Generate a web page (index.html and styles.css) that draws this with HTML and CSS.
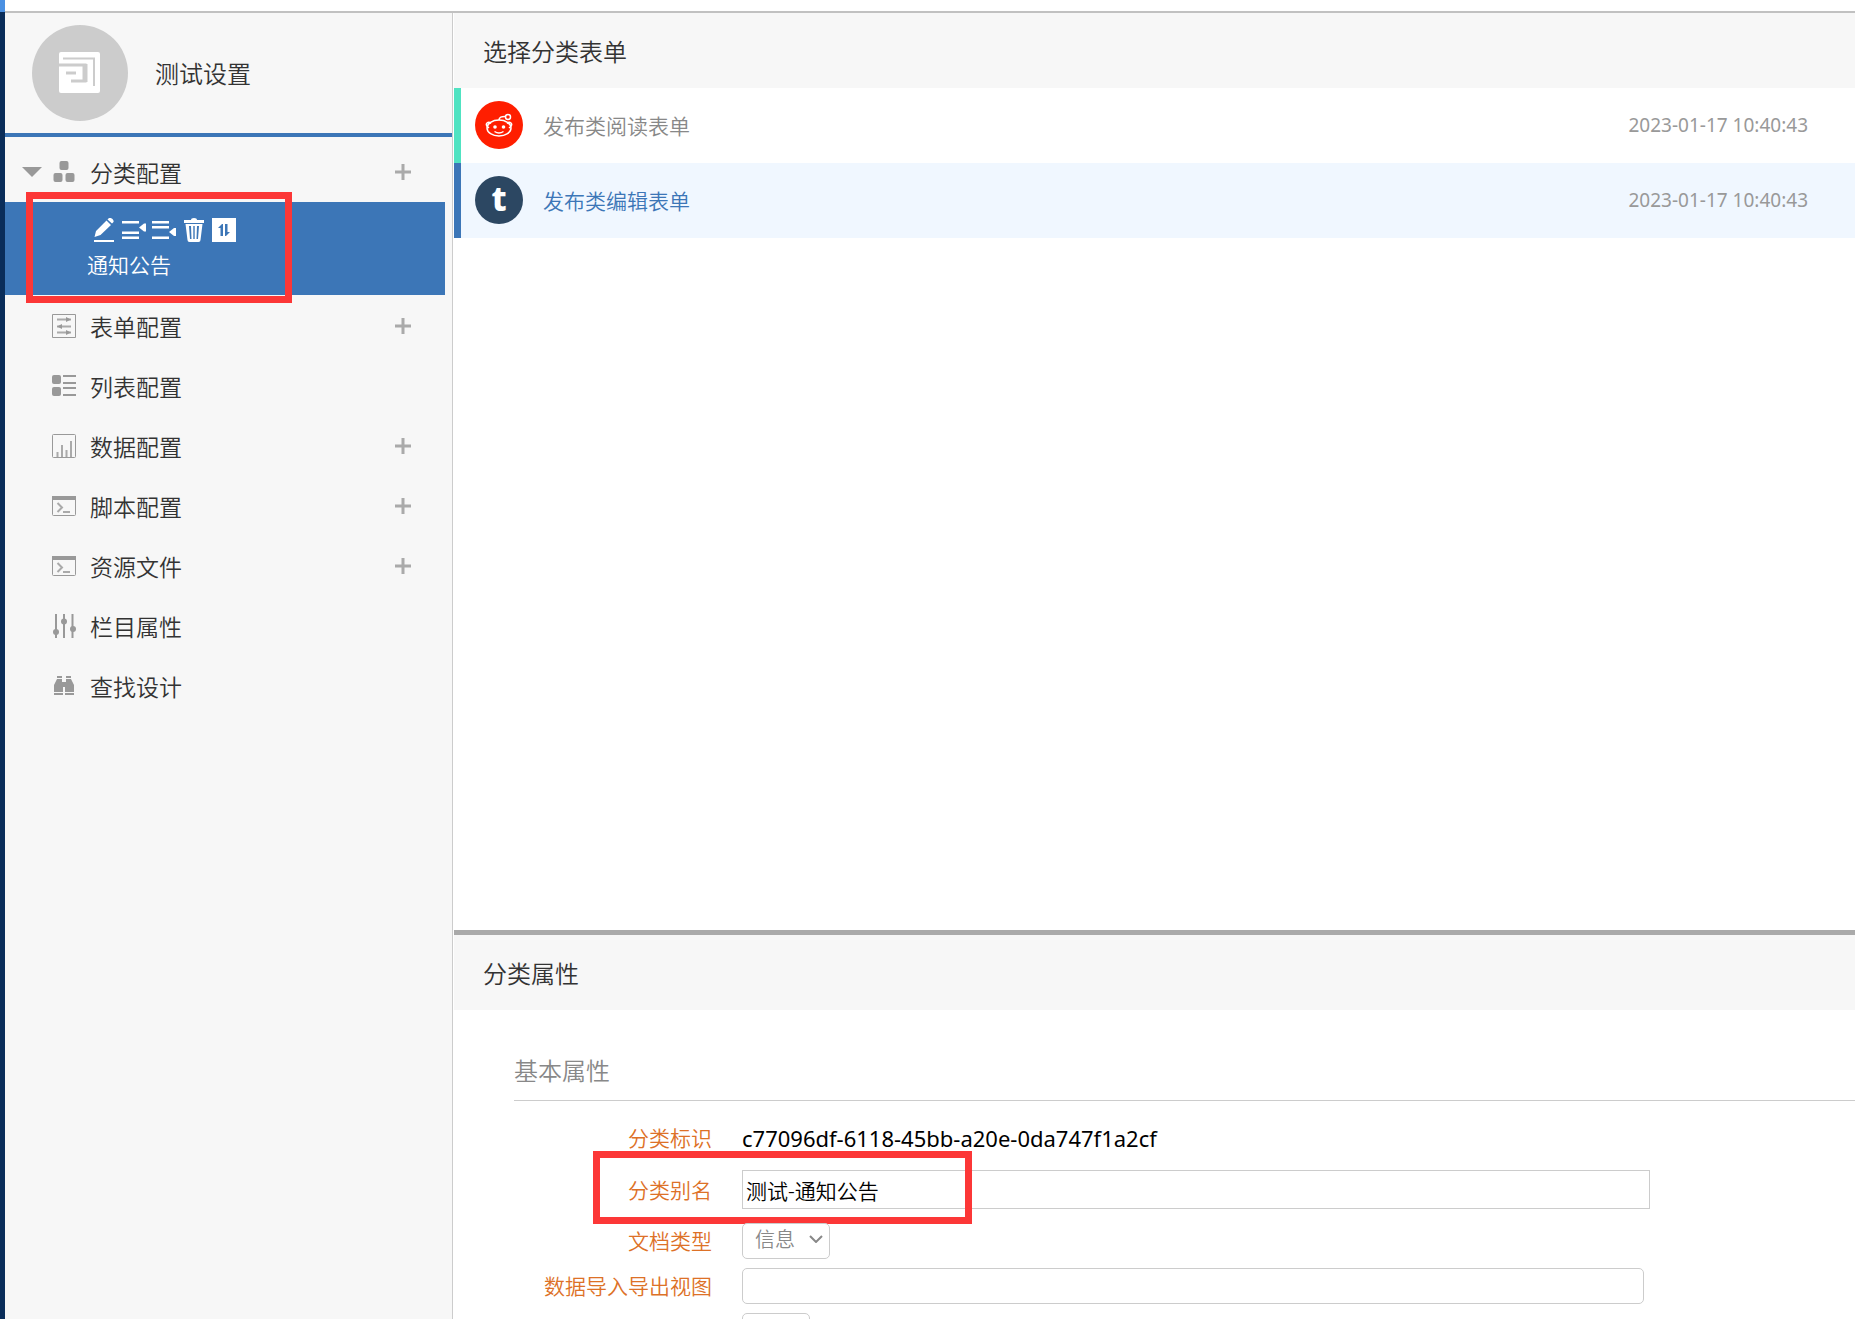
FILE: index.html
```html
<!DOCTYPE html>
<html lang="zh-CN">
<head>
  <meta charset="utf-8">
  <title>测试设置</title>
  <link rel="stylesheet" href="styles.css">
</head>
<body>
  <div class="rail"><div class="rail-active"></div></div>

  <div class="page">
    <header class="topbar"></header>
    <div class="content">

      <aside class="sidebar">
        <div class="profile">
          <svg class="avatar" viewBox="0 0 96 96">
            <circle cx="48" cy="48" r="48" fill="#cccccc"/>
            <rect x="27" y="27" width="41" height="41" rx="2" fill="#ffffff"/>
            <path d="M31 33.500H62V61" fill="none" stroke="#cccccc" stroke-width="2"/>
            <path d="M27 40H53V56H39" fill="none" stroke="#cccccc" stroke-width="3"/>
            <path d="M53 39V57" fill="none" stroke="#cccccc" stroke-width="5"/>
            <path d="M34 48H44" fill="none" stroke="#cccccc" stroke-width="3"/>
          </svg>
          <span class="profile-name">测试设置</span>
        </div>

        <ul class="menu">
          <li>
            <div class="menu-row">
              <button class="toggle" aria-label="收起"></button>
              <svg class="icon" viewBox="0 0 24 24"><rect x="7.500" y="1" width="9" height="9" rx="2"/><rect x="1.500" y="13" width="9" height="9" rx="2"/><rect x="13.500" y="13" width="9" height="9" rx="2"/></svg>
              <a href="#">分类配置</a>
              <button class="add" aria-label="添加"><svg viewBox="0 0 18 18"><path d="M9 1V17M1 9H17"/></svg></button>
            </div>
            <div class="sub-item">
              <div class="tools">
                <button aria-label="编辑"><svg viewBox="0 0 24 24"><path d="M2 22h20v2H2zM2.500 19l1.500-6L14.500 2.500l4.500 4.500L8.500 17zM15.500 1.500l1.500-1.500q2-.5 3.500 1t1 3L20 5.500z"/></svg></button>
                <button aria-label="前插"><svg viewBox="0 0 24 24"><path d="M0 3h17v2.500H0zM0 13.500h17V16H0zM0 18.500h17V21H0zM24 5.500v8h-2l-5-4 5-4z"/></svg></button>
                <button aria-label="后插"><svg viewBox="0 0 24 24"><path d="M0 3h17v2.500H0zM0 8h17v2.500H0zM0 18.500h17V21H0zM24 10v8h-2l-5-4 5-4z"/></svg></button>
                <button aria-label="删除"><svg viewBox="0 0 24 24"><path fill-rule="evenodd" d="M2 2h7q0-2 3-2t3 2h7v3H2zM3.500 6h17L18.500 22q0 2-2 2h-9q-2 0-2-2zM7 8l1 13h1.500L9 8zM11.300 8v13h1.400V8zM15 8l-.5 13H16l1-13z"/></svg></button>
                <button aria-label="排序"><svg viewBox="0 0 24 24"><path d="M0 0h24v24H0z"/><path class="sort-arrows" d="M11 18H8.500V10H6l4-4h1zM13 6h2.500v8H18l-4 4h-1z"/></svg></button>
              </div>
              <a href="#">通知公告</a>
              <div class="mark mark-menu"></div>
            </div>
          </li>
          <li class="menu-row">
            <svg class="icon line" viewBox="0 0 24 24"><path d="M.5.500h23v23H.5z"/><path class="thick" d="M5 5.500h14M5 12.500h14M5 18.500h14"/><path class="solid" d="M14 3l5 2.500-5 2.500zM10 10l-5 2.500 5 2.500zM14 16l5 2.500-5 2.500z"/></svg>
            <a href="#">表单配置</a>
            <button class="add" aria-label="添加"><svg viewBox="0 0 18 18"><path d="M9 1V17M1 9H17"/></svg></button>
          </li>
          <li class="menu-row">
            <svg class="icon" viewBox="0 0 24 24"><rect y="1" width="9" height="9" rx="2"/><rect y="13" width="9" height="9" rx="2"/><path d="M11 1h13v2H11zM11 8h13v2H11zM11 13h13v2H11zM11 20h13v2H11z"/></svg>
            <a href="#">列表配置</a>
          </li>
          <li class="menu-row">
            <svg class="icon line" viewBox="0 0 24 24"><rect x=".5" y=".5" width="23" height="23" rx="1"/><path class="thick" d="M5.500 23v-5M10 23V11M14.500 23v-7M19 23V7"/></svg>
            <a href="#">数据配置</a>
            <button class="add" aria-label="添加"><svg viewBox="0 0 18 18"><path d="M9 1V17M1 9H17"/></svg></button>
          </li>
          <li class="menu-row">
            <svg class="icon line" viewBox="0 0 24 24"><rect x=".5" y="2.500" width="23" height="19" rx="1"/><path class="solid" d="M0 2h24v4H0z"/><path class="thick" d="M5.500 9l4.500 4.500L5.500 18M11 18h7"/></svg>
            <a href="#">脚本配置</a>
            <button class="add" aria-label="添加"><svg viewBox="0 0 18 18"><path d="M9 1V17M1 9H17"/></svg></button>
          </li>
          <li class="menu-row">
            <svg class="icon line" viewBox="0 0 24 24"><rect x=".5" y="2.500" width="23" height="19" rx="1"/><path class="solid" d="M0 2h24v4H0z"/><path class="thick" d="M5.500 9l4.500 4.500L5.500 18M11 18h7"/></svg>
            <a href="#">资源文件</a>
            <button class="add" aria-label="添加"><svg viewBox="0 0 18 18"><path d="M9 1V17M1 9H17"/></svg></button>
          </li>
          <li class="menu-row">
            <svg class="icon" viewBox="0 0 24 24"><path d="M3 0h2v24H3zM11 0h2v24h-2zM19.500 0h2v24h-2z"/><circle cx="4" cy="18" r="3"/><circle cx="12" cy="7.500" r="3"/><circle cx="21" cy="15" r="3"/></svg>
            <a href="#">栏目属性</a>
          </li>
          <li class="menu-row">
            <svg class="icon" viewBox="0 0 24 24"><path d="M5 2h5v2H5zM14 2h5v2h-5zM5 5h5v3h4V5h5l3 6v7h-9v-5h-2v5H2v-7zM2 19h9v2H2zM13 19h9v2h-9z"/></svg>
            <a href="#">查找设计</a>
          </li>
        </ul>
      </aside>

      <main class="main">
        <section class="forms">
          <h2>选择分类表单</h2>
          <ul class="form-list">
            <li class="read">
              <svg class="badge" viewBox="0 0 48 48">
                <circle cx="24" cy="24" r="24" fill="#ff1e00"/>
                <g fill="none" stroke="#ffffff" stroke-width="1.500"><ellipse cx="24" cy="27" rx="12" ry="8"/><path d="M24 19q0-4 7-3.500M14 27q-4-3-2-5 2-1.500 4 .5M34 27q4-3 2-5-2-1.500-4 .5M19.500 30.500q4.500 3 9 0"/><circle cx="33" cy="16" r="2.500"/></g>
                <circle cx="20" cy="26" r="1.800" fill="#ffffff"/><circle cx="28.500" cy="26" r="1.800" fill="#ffffff"/>
              </svg>
              <a href="#">发布类阅读表单</a>
              <time>2023-01-17 10:40:43</time>
            </li>
            <li class="edit">
              <span class="badge badge-t">t</span>
              <a href="#">发布类编辑表单</a>
              <time>2023-01-17 10:40:43</time>
            </li>
          </ul>
        </section>

        <section class="props">
          <h2>分类属性</h2>
          <form class="props-form">
            <h3>基本属性</h3>
            <div class="field">
              <label for="uid">分类标识</label>
              <div><output id="uid">c77096df-6118-45bb-a20e-0da747f1a2cf</output></div>
            </div>
            <div class="field field-alias">
              <label for="alias">分类别名</label>
              <div><input id="alias" class="alias" type="text" value="测试-通知公告"></div>
              <div class="mark mark-alias"></div>
            </div>
            <div class="field">
              <label for="doctype">文档类型</label>
              <div class="select">
                <select id="doctype"><option>信息</option></select>
                <svg viewBox="0 0 14 8"><path d="M1 1l6 6 6-6"/></svg>
              </div>
            </div>
            <div class="field">
              <label for="view">数据导入导出视图</label>
              <div><input id="view" type="text"></div>
            </div>
            <div class="field">
              <span></span>
              <div><select class="small" aria-label="选项"></select></div>
            </div>
          </form>
        </section>
      </main>

    </div>
  </div>
</body>
</html>
```
FILE: styles.css
```css
* {
  box-sizing: border-box;
}

body {
  display: flex;
  height: 100vh;
  margin: 0;
  overflow: hidden;
  background: #fff;
  color: #333;
  font-family: "Noto Sans", "Noto Sans CJK SC", sans-serif;
  font-weight: 350;
}

a {
  color: inherit;
  text-decoration: none;
}

ul {
  margin: 0;
  padding: 0;
  list-style: none;
}

button {
  padding: 0;
  border: none;
  background: none;
  cursor: pointer;
}

svg {
  display: block;
}

.rail {
  flex: none;
  width: 5px;
  background: #0a2d5a;
}

.rail-active {
  height: 12px;
  background: #4a90e2;
}

.page {
  flex: 1;
  min-width: 0;
  display: flex;
  flex-direction: column;
}

.topbar {
  flex: none;
  height: 13px;
  border-bottom: 2px solid #c1c1c1;
}

.content {
  flex: 1;
  min-height: 0;
  display: flex;
  gap: 1px;
}

/* sidebar */
.sidebar {
  flex: none;
  width: 448px;
  border-right: 1px solid #ccc;
  background: #f7f7f7;
}

.profile {
  display: flex;
  align-items: center;
  gap: 27px;
  padding: 12px 27px;
  border-bottom: 4px solid #3c76b7;
  font-size: 24px;
}

.profile-name {
  padding-bottom: 2px;
}

.avatar {
  width: 96px;
  height: 96px;
}

.menu {
  padding-top: 5px;
  font-size: 23px;
}

.menu-row {
  position: relative;
  display: flex;
  align-items: center;
  height: 60px;
  padding: 0 40px 0 47px;
}

.icon {
  width: 24px;
  height: 24px;
  margin-right: 14px;
  fill: #999;
}

.icon.line {
  fill: none;
  stroke: #999;
}

.icon .solid {
  fill: #999;
  stroke: none;
}

.icon .thick {
  stroke: #aaa;
  stroke-width: 2;
}

.toggle {
  position: absolute;
  left: 17px;
  border: 10px solid transparent;
  border-top-color: #999;
  border-bottom: 0;
}

.add {
  margin-left: auto;
}

.add svg {
  width: 18px;
  height: 18px;
  fill: none;
  stroke: #aaa;
  stroke-width: 3;
}

.sub-item {
  position: relative;
  height: 93px;
  margin: 0 7px 1px 0;
  padding: 16px 82px 0;
  background: #3c76b7;
  color: #fff;
  font-size: 21px;
  line-height: 30px;
}

.sub-item a {
  display: block;
  padding-top: 8px;
}

.tools {
  display: flex;
  gap: 6px;
  padding-left: 5px;
}

.tools svg {
  width: 24px;
  height: 24px;
  fill: #fff;
}

.tools .sort-arrows {
  fill: #3c76b7;
}

/* highlight frames */
.mark {
  position: absolute;
  border: 7px solid #fc3737;
  pointer-events: none;
}

.mark-menu {
  top: -10px;
  left: 21px;
  width: 266px;
  height: 111px;
}

.mark-alias {
  top: -14px;
  left: 139px;
  width: 379px;
  height: 73px;
}

/* main */
.main {
  flex: 1;
  min-width: 0;
  display: flex;
  flex-direction: column;
}

h2,
h3 {
  margin: 0;
  font-size: 24px;
  font-weight: 350;
}

h2 {
  height: 75px;
  padding: 0 29px;
  background: #f7f7f7;
  line-height: 77px;
}

.forms {
  flex: 1;
}

.form-list li {
  display: flex;
  align-items: center;
  height: 75px;
  padding: 0 47px 2px 14px;
  border-left: 7px solid #50e3c2;
  color: #888;
  font-size: 21px;
}

.form-list .edit {
  border-color: #3c76b7;
  background: #f0f7ff;
  color: #3c76b7;
}

.badge {
  width: 48px;
  height: 48px;
  margin-right: 20px;
}

.badge-t {
  border-radius: 50%;
  background: #2c4762;
  color: #fff;
  font-size: 34px;
  font-weight: 800;
  line-height: 44px;
  text-align: center;
}

.form-list time {
  margin-left: auto;
  color: #999;
  font-size: 19px;
  font-weight: 400;
}

/* properties */
.props {
  flex: none;
  height: 389px;
  border-top: 5px solid #aaa;
  overflow: hidden;
}

.props-form {
  display: flex;
  flex-direction: column;
  gap: 9px;
  padding-top: 36px;
}

h3 {
  margin: 0 0 10px 60px;
  padding-bottom: 5px;
  border-bottom: 1px solid #ccc;
  color: #888;
  line-height: 49px;
}

.field {
  position: relative;
  display: grid;
  grid-template-columns: 258px 1fr;
  gap: 30px;
  align-items: center;
  min-height: 36px;
}

.field-alias {
  padding: 5px 0;
}

.field label {
  padding-bottom: 2px;
  color: #dd7127;
  font-size: 21px;
  text-align: right;
}

.field output {
  color: #000;
  font-size: 22px;
  font-weight: 400;
}

.field input,
.field select {
  height: 36px;
  border: 1px solid #ccc;
  border-radius: 5px;
  background: #fff;
  color: #888;
  font-family: inherit;
  font-size: 20px;
  font-weight: 350;
}

.field input {
  display: block;
  width: 81%;
}

.field .alias {
  box-sizing: content-box;
  height: 37px;
  padding: 0 2px;
  border-radius: 0;
  color: #000;
  font-size: 21px;
  text-indent: 1px;
}

.select {
  position: relative;
}

.field select {
  display: block;
  width: 88px;
  padding: 0 12px 4px;
  appearance: none;
}

.select svg {
  position: absolute;
  top: 12px;
  left: 67px;
  width: 14px;
  height: 8px;
  fill: none;
  stroke: #888;
  stroke-width: 2;
}

.field .small {
  width: 68px;
}
```
